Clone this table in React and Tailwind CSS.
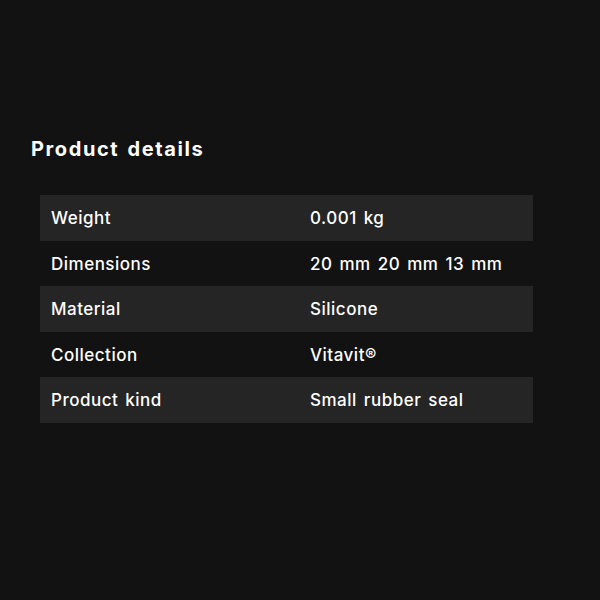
export default function App() {
  const rows = [
    ["Weight", "0.001 kg"],
    ["Dimensions", "20 mm 20 mm 13 mm"],
    ["Material", "Silicone"],
    ["Collection", "Vitavit®"],
    ["Product kind", "Small rubber seal"],
  ];
  return (
    <div className="w-[600px] h-[600px] bg-[#121212] text-white pt-[136px] pl-[31px]" style={{ fontFamily: "Inter, 'Liberation Sans', sans-serif" }}>
      <h2 className="text-[20px] font-bold leading-[26px] tracking-[1.6px] [word-spacing:2px]">Product details</h2>
      <div className="mt-[33px] ml-[9px] w-[493px] flex flex-col">
        {rows.map(([k, v], i) => (
          <div key={k} className={`flex h-[45.6px] items-center pt-[2px] text-[17px] font-medium tracking-[0.5px] [word-spacing:2px] ${i % 2 === 0 ? "bg-[#252525]" : ""}`}>
            <div className="w-[259px] pl-[11px]">{k}</div>
            <div className="pl-[11px]">{v}</div>
          </div>
        ))}
      </div>
    </div>
  );
}
